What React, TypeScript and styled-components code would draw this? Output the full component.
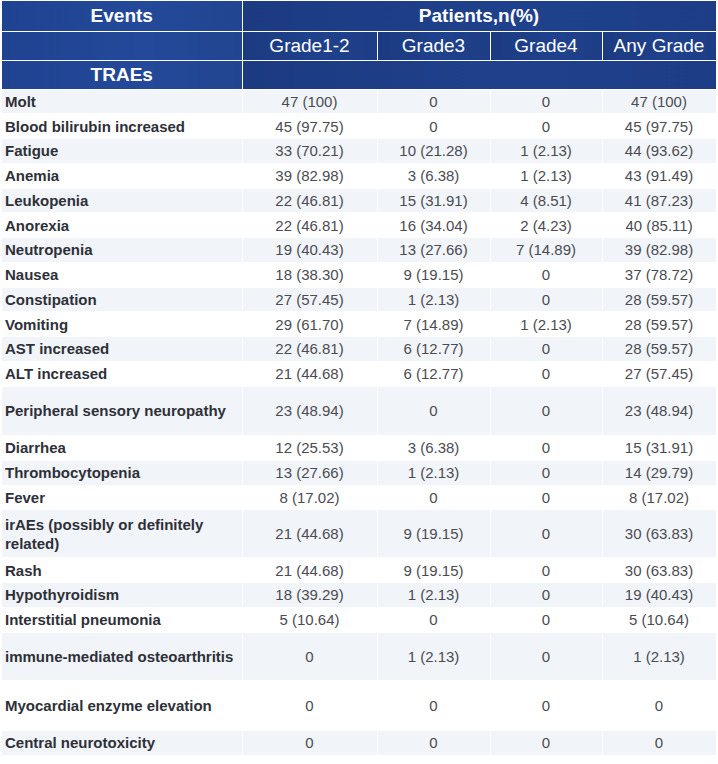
import React from "react";
import styled, { createGlobalStyle } from "styled-components";

const Global = createGlobalStyle`
  html, body { margin: 0; padding: 0; background: #ffffff; }
  body { font-family: "Liberation Sans", Arial, sans-serif; }
`;

const Wrap = styled.div`
  padding: 1px 2px 0;
  width: 714px;
`;

const Table = styled.table`
  width: 714px;
  table-layout: fixed;
  border-collapse: collapse;
  font-family: "Liberation Sans", Arial, sans-serif;
`;

const HeadRow = styled.tr<{ $h: number }>`
  height: ${(p) => p.$h}px;
`;

const HeadCell = styled.th<{ $bold?: boolean; $left?: boolean }>`
  padding: 0;
  border: 1px solid #ffffff;
  border-top: none;
  ${(p) => (p.$left ? "border-left: none;" : "")}
  background: ${(p) =>
    p.$left
      ? "linear-gradient(90deg, #1f4390 0%, #24499a 60%, #21458f 100%)"
      : "linear-gradient(90deg, #1b3a80 0%, #1f418c 55%, #1d3d86 100%)"};
  color: #ffffff;
  font-size: 19px;
  font-weight: ${(p) => (p.$bold ? 700 : 400)};
  text-align: center;
  vertical-align: middle;
  line-height: 22px;
`;

const Row = styled.tr<{ $h: number; $shade: boolean }>`
  height: ${(p) => p.$h}px;
  background: ${(p) => (p.$shade ? "#f1f4f8" : "#ffffff")};
`;

const Label = styled.td`
  padding: 0 4px 0 3px;
  border: 1px solid #ffffff;
  border-left: none;
  font-size: 15px;
  font-weight: 700;
  color: #2e3038;
  line-height: 19px;
  text-align: left;
  vertical-align: middle;
`;

const Value = styled.td`
  padding: 0;
  border: 1px solid #ffffff;
  font-size: 15px;
  color: #4a4c52;
  line-height: 19px;
  text-align: center;
  vertical-align: middle;
`;

type Ev = { name: string; v: [string, string, string, string]; h?: number };

const data: Ev[] = [
  { name: "Molt", v: ["47 (100)", "0", "0", "47 (100)"] },
  { name: "Blood bilirubin increased", v: ["45 (97.75)", "0", "0", "45 (97.75)"] },
  { name: "Fatigue", v: ["33 (70.21)", "10 (21.28)", "1 (2.13)", "44 (93.62)"] },
  { name: "Anemia", v: ["39 (82.98)", "3 (6.38)", "1 (2.13)", "43 (91.49)"] },
  { name: "Leukopenia", v: ["22 (46.81)", "15 (31.91)", "4 (8.51)", "41 (87.23)"] },
  { name: "Anorexia", v: ["22 (46.81)", "16 (34.04)", "2 (4.23)", "40 (85.11)"] },
  { name: "Neutropenia", v: ["19 (40.43)", "13 (27.66)", "7 (14.89)", "39 (82.98)"] },
  { name: "Nausea", v: ["18 (38.30)", "9 (19.15)", "0", "37 (78.72)"] },
  { name: "Constipation", v: ["27 (57.45)", "1 (2.13)", "0", "28 (59.57)"] },
  { name: "Vomiting", v: ["29 (61.70)", "7 (14.89)", "1 (2.13)", "28 (59.57)"] },
  { name: "AST increased", v: ["22 (46.81)", "6 (12.77)", "0", "28 (59.57)"] },
  { name: "ALT increased", v: ["21 (44.68)", "6 (12.77)", "0", "27 (57.45)"] },
  { name: "Peripheral sensory neuropathy", v: ["23 (48.94)", "0", "0", "23 (48.94)"], h: 49.5 },
  { name: "Diarrhea", v: ["12 (25.53)", "3 (6.38)", "0", "15 (31.91)"] },
  { name: "Thrombocytopenia", v: ["13 (27.66)", "1 (2.13)", "0", "14 (29.79)"] },
  { name: "Fever", v: ["8 (17.02)", "0", "0", "8 (17.02)"] },
  { name: "irAEs (possibly or definitely related)", v: ["21 (44.68)", "9 (19.15)", "0", "30 (63.83)"], h: 48 },
  { name: "Rash", v: ["21 (44.68)", "9 (19.15)", "0", "30 (63.83)"] },
  { name: "Hypothyroidism", v: ["18 (39.29)", "1 (2.13)", "0", "19 (40.43)"] },
  { name: "Interstitial pneumonia", v: ["5 (10.64)", "0", "0", "5 (10.64)"] },
  { name: "immune-mediated osteoarthritis", v: ["0", "1 (2.13)", "0", "1 (2.13)"], h: 48.5 },
  { name: "Myocardial enzyme elevation", v: ["0", "0", "0", "0"], h: 49.5 },
  { name: "Central neurotoxicity", v: ["0", "0", "0", "0"], h: 25.5 },
];

export default function App() {
  return (
    <>
      <Global />
      <Wrap>
        <Table>
          <colgroup>
            <col style={{ width: 240 }} />
            <col style={{ width: 135 }} />
            <col style={{ width: 113 }} />
            <col style={{ width: 112 }} />
            <col style={{ width: 114 }} />
          </colgroup>
          <thead>
            <HeadRow $h={30}>
              <HeadCell $bold $left>Events</HeadCell>
              <HeadCell $bold colSpan={4}>Patients,n(%)</HeadCell>
            </HeadRow>
            <HeadRow $h={29}>
              <HeadCell $left />
              <HeadCell>Grade1-2</HeadCell>
              <HeadCell>Grade3</HeadCell>
              <HeadCell>Grade4</HeadCell>
              <HeadCell>Any Grade</HeadCell>
            </HeadRow>
            <HeadRow $h={29}>
              <HeadCell $bold $left>TRAEs</HeadCell>
              <HeadCell colSpan={4} />
            </HeadRow>
          </thead>
          <tbody>
            {data.map((e, i) => (
              <Row key={e.name} $h={e.h ?? 24.75} $shade={i % 2 === 0}>
                <Label>{e.name}</Label>
                {e.v.map((x, j) => (
                  <Value key={j}>{x}</Value>
                ))}
              </Row>
            ))}
          </tbody>
        </Table>
      </Wrap>
    </>
  );
}
